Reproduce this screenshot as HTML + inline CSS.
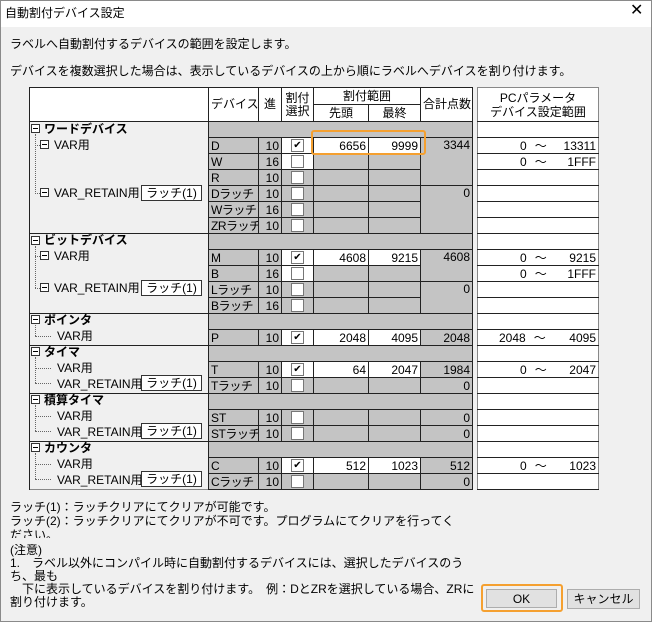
<!DOCTYPE html><html><head><meta charset="utf-8"><style>
*{box-sizing:border-box}
body{margin:0;width:652px;height:622px;overflow:hidden;background:#f0f0f0;font-family:"Liberation Sans","Noto Sans CJK JP",sans-serif;font-size:12px;color:#000;position:relative}
.win{position:absolute;left:0;top:0;width:652px;height:622px;border:1px solid #8a8a8a}
.title{position:absolute;left:1px;top:1px;width:650px;height:26px;background:#fff}
.a{position:absolute;white-space:nowrap;line-height:14px}
table{border-collapse:collapse;table-layout:fixed;position:absolute}
td{padding:0 2px;height:16px;line-height:14px;font-size:12px;white-space:nowrap;overflow:hidden}
#m{left:29px;top:87px;width:443px;border:1px solid #888}
#m td{border:1px solid #222;background:#c4c4c4}
#m td.t{background:#f0f0f0;border-top:none;border-bottom:none}
#m td.t.g{border-top:1px solid #222}
#m tr.h td{background:#fff;text-align:center;line-height:13px;height:17px}
#m td.h0{background:#f0f0f0}
#m td.w{background:#fff}
#m td.r{text-align:right}
.cb{display:block;margin:0 auto;width:13px;height:13px;border:1px solid #777;background:#fff;font-size:10px;line-height:11px;text-align:center}
#p{left:477px;top:87px;width:122px;border:1px solid #888;background:#fff}
#p td{border-top:1px solid #222;border-bottom:1px solid #222;height:16px}
.dot{position:absolute;border-left:1px dotted #666}
.hd{position:absolute;border-top:1px dotted #666}
.bx{position:absolute;width:9px;height:9px;border:1px solid #333;background:#fff}
.bx:after{content:"";position:absolute;left:1px;top:3px;width:5px;height:1px;background:#000}
.lb{position:absolute;width:61px;height:16px;border:1px solid #333;background:#fff;text-align:center;line-height:14px}
.btn{position:absolute;background:#e1e1e1;border:1px solid #adadad;text-align:center;line-height:18px}
.dv{letter-spacing:-0.5px}
</style></head><body>
<div class="win"></div>
<div class="title"></div>
<div class="a" style="left:5px;top:6px">自動割付デバイス設定</div>
<div class="a" style="left:630px;top:4px;font-size:16px">✕</div>
<div class="a" style="left:10px;top:37px">ラベルへ自動割付するデバイスの範囲を設定します。</div>
<div class="a" style="left:10px;top:64px">デバイスを複数選択した場合は、表示しているデバイスの上から順にラベルへデバイスを割り付けます。</div>

<table id="m">
<colgroup><col style="width:179px"><col style="width:50px"><col style="width:23px"><col style="width:32px"><col style="width:55px"><col style="width:52px"><col style="width:52px"></colgroup>
<tr class="h"><td rowspan="2" class="h0" style="background:#fff"></td><td rowspan="2">デバイス</td><td rowspan="2">進</td><td rowspan="2">割付<br>選択</td><td colspan="2">割付範囲</td><td rowspan="2">合計点数</td></tr>
<tr class="h"><td>先頭</td><td>最終</td></tr>
<tr><td class="t g"></td><td colspan="6"></td></tr>
<tr><td class="t"></td><td>D</td><td class="r">10</td><td class="w"><span class="cb">✔</span></td><td class="w r">6656</td><td class="w r">9999</td><td class="r" rowspan="3" style="vertical-align:top">3344</td></tr>
<tr><td class="t"></td><td>W</td><td class="r">16</td><td class="w"><span class="cb"></span></td><td></td><td style="border-top:1px dotted #222"></td></tr>
<tr><td class="t"></td><td>R</td><td class="r">10</td><td><span class="cb"></span></td><td></td><td></td></tr>
<tr><td class="t"></td><td class="dv">Dラッチ</td><td class="r">10</td><td><span class="cb"></span></td><td></td><td></td><td class="r" rowspan="3" style="vertical-align:top">0</td></tr>
<tr><td class="t"></td><td class="dv">Wラッチ</td><td class="r">16</td><td><span class="cb"></span></td><td></td><td></td></tr>
<tr><td class="t"></td><td class="dv">ZRラッチ</td><td class="r">10</td><td><span class="cb"></span></td><td></td><td></td></tr>
<tr><td class="t g"></td><td colspan="6"></td></tr>
<tr><td class="t"></td><td>M</td><td class="r">10</td><td class="w"><span class="cb">✔</span></td><td class="w r">4608</td><td class="w r">9215</td><td class="r" rowspan="2" style="vertical-align:top">4608</td></tr>
<tr><td class="t"></td><td>B</td><td class="r">16</td><td class="w"><span class="cb"></span></td><td></td><td></td></tr>
<tr><td class="t"></td><td class="dv">Lラッチ</td><td class="r">10</td><td><span class="cb"></span></td><td></td><td></td><td class="r" rowspan="2" style="vertical-align:top">0</td></tr>
<tr><td class="t"></td><td class="dv">Bラッチ</td><td class="r">16</td><td><span class="cb"></span></td><td></td><td></td></tr>
<tr><td class="t g"></td><td colspan="6"></td></tr>
<tr><td class="t"></td><td>P</td><td class="r">10</td><td class="w"><span class="cb">✔</span></td><td class="w r">2048</td><td class="w r">4095</td><td class="r">2048</td></tr>
<tr><td class="t g"></td><td colspan="6"></td></tr>
<tr><td class="t"></td><td>T</td><td class="r">10</td><td class="w"><span class="cb">✔</span></td><td class="w r">64</td><td class="w r">2047</td><td class="r">1984</td></tr>
<tr><td class="t"></td><td class="dv">Tラッチ</td><td class="r">10</td><td><span class="cb"></span></td><td></td><td></td><td class="r">0</td></tr>
<tr><td class="t g"></td><td colspan="6"></td></tr>
<tr><td class="t"></td><td>ST</td><td class="r">10</td><td><span class="cb"></span></td><td></td><td></td><td class="r">0</td></tr>
<tr><td class="t"></td><td class="dv">STラッチ</td><td class="r">10</td><td><span class="cb"></span></td><td></td><td></td><td class="r">0</td></tr>
<tr><td class="t g"></td><td colspan="6"></td></tr>
<tr><td class="t"></td><td>C</td><td class="r">10</td><td class="w"><span class="cb">✔</span></td><td class="w r">512</td><td class="w r">1023</td><td class="r">512</td></tr>
<tr><td class="t"></td><td class="dv">Cラッチ</td><td class="r">10</td><td><span class="cb"></span></td><td></td><td></td><td class="r">0</td></tr>
</table>

<table id="p">
<tr><td style="height:34px;text-align:center;line-height:14px;border-top:none">PCパラメータ<br>デバイス設定範囲</td></tr>
<tr><td></td></tr>
<tr><td><span style="margin-left:40px">0</span><span style="margin-left:8px">～</span><span style="float:right">13311</span></td></tr>
<tr><td><span style="margin-left:40px">0</span><span style="margin-left:8px">～</span><span style="float:right">1FFF</span></td></tr>
<tr><td></td></tr><tr><td></td></tr><tr><td></td></tr><tr><td></td></tr><tr><td></td></tr>
<tr><td><span style="margin-left:40px">0</span><span style="margin-left:8px">～</span><span style="float:right">9215</span></td></tr>
<tr><td><span style="margin-left:40px">0</span><span style="margin-left:8px">～</span><span style="float:right">1FFF</span></td></tr>
<tr><td></td></tr><tr><td></td></tr><tr><td></td></tr>
<tr><td><span style="margin-left:19px">2048</span><span style="margin-left:8px">～</span><span style="float:right">4095</span></td></tr>
<tr><td></td></tr>
<tr><td><span style="margin-left:40px">0</span><span style="margin-left:8px">～</span><span style="float:right">2047</span></td></tr>
<tr><td></td></tr><tr><td></td></tr><tr><td></td></tr><tr><td></td></tr><tr><td></td></tr>
<tr><td><span style="margin-left:40px">0</span><span style="margin-left:8px">～</span><span style="float:right">1023</span></td></tr>
<tr><td></td></tr>
</table>

<div class="bx" style="left:31px;top:124px"></div><div class="a" style="left:44px;top:122px;font-weight:bold">ワードデバイス</div>
<div class="dot" style="left:35px;top:134px;height:60px"></div>
<div class="hd" style="left:35px;top:145px;width:5px"></div><div class="bx" style="left:40px;top:140px"></div><div class="a" style="left:54px;top:138px">VAR用</div>
<div class="hd" style="left:35px;top:193px;width:5px"></div><div class="bx" style="left:40px;top:188px"></div><div class="a" style="left:54px;top:186px">VAR_RETAIN用</div>
<div class="lb" style="left:141px;top:185px">ラッチ(1)</div>

<div class="bx" style="left:31px;top:236px"></div><div class="a" style="left:44px;top:233px;font-weight:bold">ビットデバイス</div>
<div class="dot" style="left:35px;top:246px;height:42px"></div>
<div class="hd" style="left:35px;top:256px;width:5px"></div><div class="bx" style="left:40px;top:251px"></div><div class="a" style="left:54px;top:249px">VAR用</div>
<div class="hd" style="left:35px;top:288px;width:5px"></div><div class="bx" style="left:40px;top:283px"></div><div class="a" style="left:54px;top:281px">VAR_RETAIN用</div>
<div class="lb" style="left:141px;top:280px">ラッチ(1)</div>

<div class="bx" style="left:31px;top:315px"></div><div class="a" style="left:44px;top:313px;font-weight:bold">ポインタ</div>
<div class="dot" style="left:35px;top:325px;height:11px"></div><div class="hd" style="left:35px;top:336px;width:16px"></div><div class="a" style="left:57px;top:329px">VAR用</div>

<div class="bx" style="left:31px;top:347px"></div><div class="a" style="left:44px;top:345px;font-weight:bold">タイマ</div>
<div class="dot" style="left:35px;top:357px;height:26px"></div><div class="hd" style="left:35px;top:368px;width:16px"></div><div class="a" style="left:57px;top:361px">VAR用</div>
<div class="hd" style="left:35px;top:383px;width:16px"></div><div class="a" style="left:57px;top:377px">VAR_RETAIN用</div>
<div class="lb" style="left:141px;top:375px">ラッチ(1)</div>

<div class="bx" style="left:31px;top:395px"></div><div class="a" style="left:44px;top:393px;font-weight:bold">積算タイマ</div>
<div class="dot" style="left:35px;top:405px;height:26px"></div><div class="hd" style="left:35px;top:416px;width:16px"></div><div class="a" style="left:57px;top:409px">VAR用</div>
<div class="hd" style="left:35px;top:431px;width:16px"></div><div class="a" style="left:57px;top:425px">VAR_RETAIN用</div>
<div class="lb" style="left:141px;top:423px">ラッチ(1)</div>

<div class="bx" style="left:31px;top:443px"></div><div class="a" style="left:44px;top:441px;font-weight:bold">カウンタ</div>
<div class="dot" style="left:35px;top:453px;height:26px"></div><div class="hd" style="left:35px;top:464px;width:16px"></div><div class="a" style="left:57px;top:457px">VAR用</div>
<div class="hd" style="left:35px;top:479px;width:16px"></div><div class="a" style="left:57px;top:473px">VAR_RETAIN用</div>
<div class="lb" style="left:141px;top:471px">ラッチ(1)</div>

<div style="position:absolute;left:311px;top:130px;width:115px;height:25px;border:2px solid #f5a030;border-radius:3px"></div>

<div style="position:absolute;left:10px;top:500px;width:470px;height:38px;overflow:hidden;line-height:14px">
ラッチ(1)：ラッチクリアにてクリアが可能です。<br>
ラッチ(2)：ラッチクリアにてクリアが不可です。プログラムにてクリアを行ってく<br>
ださい。
</div>
<div style="position:absolute;left:10px;top:544px;width:470px;height:68px;overflow:hidden;line-height:13px">
(注意)<br>
1.　ラベル以外にコンパイル時に自動割付するデバイスには、選択したデバイスのう<br>
ち、最も<br>
　下に表示しているデバイスを割り付けます。　例：DとZRを選択している場合、ZRに<br>
割り付けます。
</div>

<div style="position:absolute;left:481px;top:584px;width:82px;height:28px;border:2px solid #f5a030;border-radius:3px"></div>
<div class="btn" style="left:486px;top:589px;width:71px;height:19px">OK</div>
<div class="btn" style="left:567px;top:589px;width:73px;height:20px">キャンセル</div>
</body></html>
